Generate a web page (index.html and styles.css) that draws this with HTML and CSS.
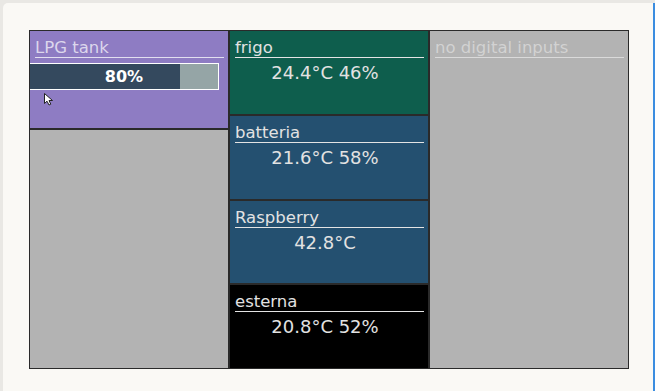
FILE: index.html
```html
<!DOCTYPE html>
<html lang="it">
<head>
    <meta charset="UTF-8">
    <meta name="viewport" content="width=device-width, initial-scale=1.0">
    <title>dashboard</title>
    <link rel="stylesheet" href="styles.css">
</head>
<body>
    <div class="page">
        <div class="board">
            <div class="col">
                <div class="tile lpg">
                    <div class="title">LPG tank</div>
                    <div class="bar">
                        <div class="fill" style="width: 80%"></div>
                        <span class="label">80%</span>
                    </div>
                    <svg class="cursor" width="12" height="13" viewBox="0 0 12 13">
                        <path d="M0.5 0.5 L0.5 10.5 L3 8.2 L5 12 L6.8 11.2 L5 7.5 L8.5 7.5 Z" fill="#fff" stroke="#222" stroke-width="1"/>
                    </svg>
                </div>
                <div class="tile blank"></div>
            </div>
            <div class="col">
                <div class="tile frigo">
                    <div class="title">frigo</div>
                    <div class="value">24.4°C 46%</div>
                </div>
                <div class="tile blue">
                    <div class="title">batteria</div>
                    <div class="value">21.6°C 58%</div>
                </div>
                <div class="tile blue">
                    <div class="title">Raspberry</div>
                    <div class="value">42.8°C</div>
                </div>
                <div class="tile black">
                    <div class="title">esterna</div>
                    <div class="value">20.8°C 52%</div>
                </div>
            </div>
            <div class="col">
                <div class="tile blank digital">
                    <div class="title">no digital inputs</div>
                </div>
            </div>
        </div>
    </div>
</body>
</html>
```
FILE: styles.css
```css
*{margin: 0;padding: 0;box-sizing: border-box;}
body{
    background-color: #e9e8e4;
    font-family: "DejaVu Sans", sans-serif;
}
.page{
    margin: 3px 0 0 3px;
    width: 652px;
    height: 388px;
    padding: 27px 0 0 26px;
    background-color: #faf9f5;
    border-top-left-radius: 5px;
    border-right: 2px solid #3b8de0;
}
.board{
    width: 600px;
    height: 339px;
    display: flex;
    gap: 2px;
    border: 1px solid #2a2a2a;
    background-color: #2a2a2a;
}
.col{
    width: 198px;
    display: flex;
    flex-direction: column;
    gap: 2px;
}
.tile{
    position: relative;
    flex: 1;
    padding: 7px 4px 0 5px;
    color: #e2e2e2;
    overflow: hidden;
}
.title{
    font-size: 16.5px;
    line-height: 19px;
    border-bottom: 1px solid #e4e4e4;
}
.value{
    margin-top: 4px;
    padding-right: 9px;
    font-size: 18px;
    line-height: 22px;
    text-align: center;
}
.lpg{
    flex: 0 0 97px;
    background-color: #8e7cc3;
    color: #dcd6ec;
}
.lpg .title{border-color: #e2dff0;}
.blank{background-color: #b3b3b3;}
.digital{color: #d2d2d2;}
.digital .title{border-color: #dadada;}
.frigo{background-color: #0e5e4d;}
.blue{background-color: #245070;}
.black{background-color: #000;}
.bar{
    position: relative;
    margin: 5px 0 0 -5px;
    width: 189px;
    height: 27px;
    border: 1px solid #fff;
    border-left: none;
    background-color: #95a5a6;
}
.fill{
    height: 100%;
    background-color: #34495e;
}
.label{
    position: absolute;
    left: 0;
    right: 0;
    top: 0;
    line-height: 25px;
    text-align: center;
    color: #fff;
    font-weight: bold;
    font-size: 16px;
}
.cursor{
    position: absolute;
    left: 14px;
    top: 62px;
}
```
